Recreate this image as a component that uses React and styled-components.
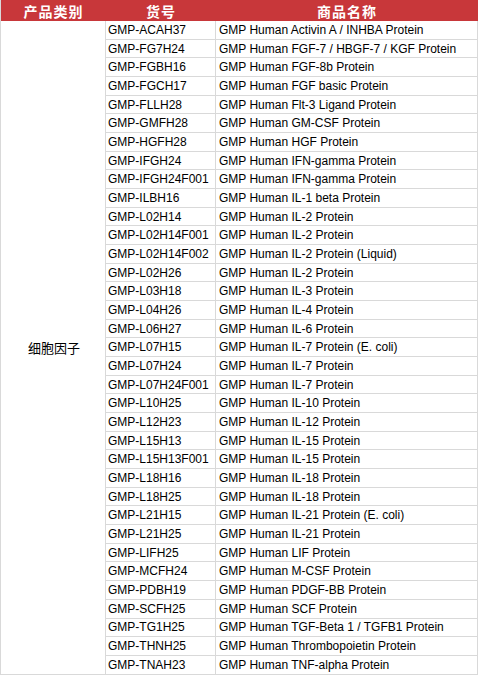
import React from 'react';
import styled, { createGlobalStyle } from 'styled-components';

const GlobalStyle = createGlobalStyle`
  html, body {
    margin: 0;
    padding: 0;
    background: #ffffff;
  }
  body {
    font-family: "Liberation Sans", "Noto Sans CJK SC", sans-serif;
  }
`;

const products = [
  ['GMP-ACAH37', 'GMP Human Activin A / INHBA Protein'],
  ['GMP-FG7H24', 'GMP Human FGF-7 / HBGF-7 / KGF Protein'],
  ['GMP-FGBH16', 'GMP Human FGF-8b Protein'],
  ['GMP-FGCH17', 'GMP Human FGF basic Protein'],
  ['GMP-FLLH28', 'GMP Human Flt-3 Ligand Protein'],
  ['GMP-GMFH28', 'GMP Human GM-CSF Protein'],
  ['GMP-HGFH28', 'GMP Human HGF Protein'],
  ['GMP-IFGH24', 'GMP Human IFN-gamma Protein'],
  ['GMP-IFGH24F001', 'GMP Human IFN-gamma Protein'],
  ['GMP-ILBH16', 'GMP Human IL-1 beta Protein'],
  ['GMP-L02H14', 'GMP Human IL-2 Protein'],
  ['GMP-L02H14F001', 'GMP Human IL-2 Protein'],
  ['GMP-L02H14F002', 'GMP Human IL-2 Protein (Liquid)'],
  ['GMP-L02H26', 'GMP Human IL-2 Protein'],
  ['GMP-L03H18', 'GMP Human IL-3 Protein'],
  ['GMP-L04H26', 'GMP Human IL-4 Protein'],
  ['GMP-L06H27', 'GMP Human IL-6 Protein'],
  ['GMP-L07H15', 'GMP Human IL-7 Protein (E. coli)'],
  ['GMP-L07H24', 'GMP Human IL-7 Protein'],
  ['GMP-L07H24F001', 'GMP Human IL-7 Protein'],
  ['GMP-L10H25', 'GMP Human IL-10 Protein'],
  ['GMP-L12H23', 'GMP Human IL-12 Protein'],
  ['GMP-L15H13', 'GMP Human IL-15 Protein'],
  ['GMP-L15H13F001', 'GMP Human IL-15 Protein'],
  ['GMP-L18H16', 'GMP Human IL-18 Protein'],
  ['GMP-L18H25', 'GMP Human IL-18 Protein'],
  ['GMP-L21H15', 'GMP Human IL-21 Protein (E. coli)'],
  ['GMP-L21H25', 'GMP Human IL-21 Protein'],
  ['GMP-LIFH25', 'GMP Human LIF Protein'],
  ['GMP-MCFH24', 'GMP Human M-CSF Protein'],
  ['GMP-PDBH19', 'GMP Human PDGF-BB Protein'],
  ['GMP-SCFH25', 'GMP Human SCF Protein'],
  ['GMP-TG1H25', 'GMP Human TGF-Beta 1 / TGFB1 Protein'],
  ['GMP-THNH25', 'GMP Human Thrombopoietin Protein'],
  ['GMP-TNAH23', 'GMP Human TNF-alpha Protein'],
];

const Sheet = styled.div`
  display: grid;
  grid-template-columns: 105px 110px 262px;
  grid-template-rows: 21px repeat(${products.length}, 18.686px);
  width: 477px;
  border-left: 1px solid #d9d9d9;
  box-sizing: border-box;
`;

const HeadCell = styled.div`
  background: #c8373a;
  color: #ffffff;
  font-family: "Noto Sans CJK SC", sans-serif;
  font-weight: bold;
  font-size: 14px;
  letter-spacing: 1px;
  display: flex;
  align-items: center;
  justify-content: center;
  line-height: 1;
`;

const Category = styled.div`
  grid-row: 2 / span ${products.length};
  display: flex;
  align-items: center;
  justify-content: center;
  font-family: "Noto Sans CJK SC", sans-serif;
  font-size: 13px;
  color: #000000;
  border-right: 1px solid #d9d9d9;
  border-bottom: 1px solid #d9d9d9;
  padding-left: 2px;
`;

const Cell = styled.div`
  display: flex;
  align-items: center;
  padding-left: ${p => (p.$wide ? 3 : 2)}px;
  font-size: 12px;
  color: #000000;
  white-space: nowrap;
  overflow: hidden;
  border-right: 1px solid #d9d9d9;
  border-bottom: 1px solid #d9d9d9;
  box-sizing: border-box;
`;

export default function App() {
  return (
    <>
      <GlobalStyle />
      <Sheet>
        <HeadCell>产品类别</HeadCell>
        <HeadCell>货号</HeadCell>
        <HeadCell>商品名称</HeadCell>
        <Category>细胞因子</Category>
        {products.map(([code, name]) => (
          <React.Fragment key={code}>
            <Cell>{code}</Cell>
            <Cell $wide>{name}</Cell>
          </React.Fragment>
        ))}
      </Sheet>
    </>
  );
}
